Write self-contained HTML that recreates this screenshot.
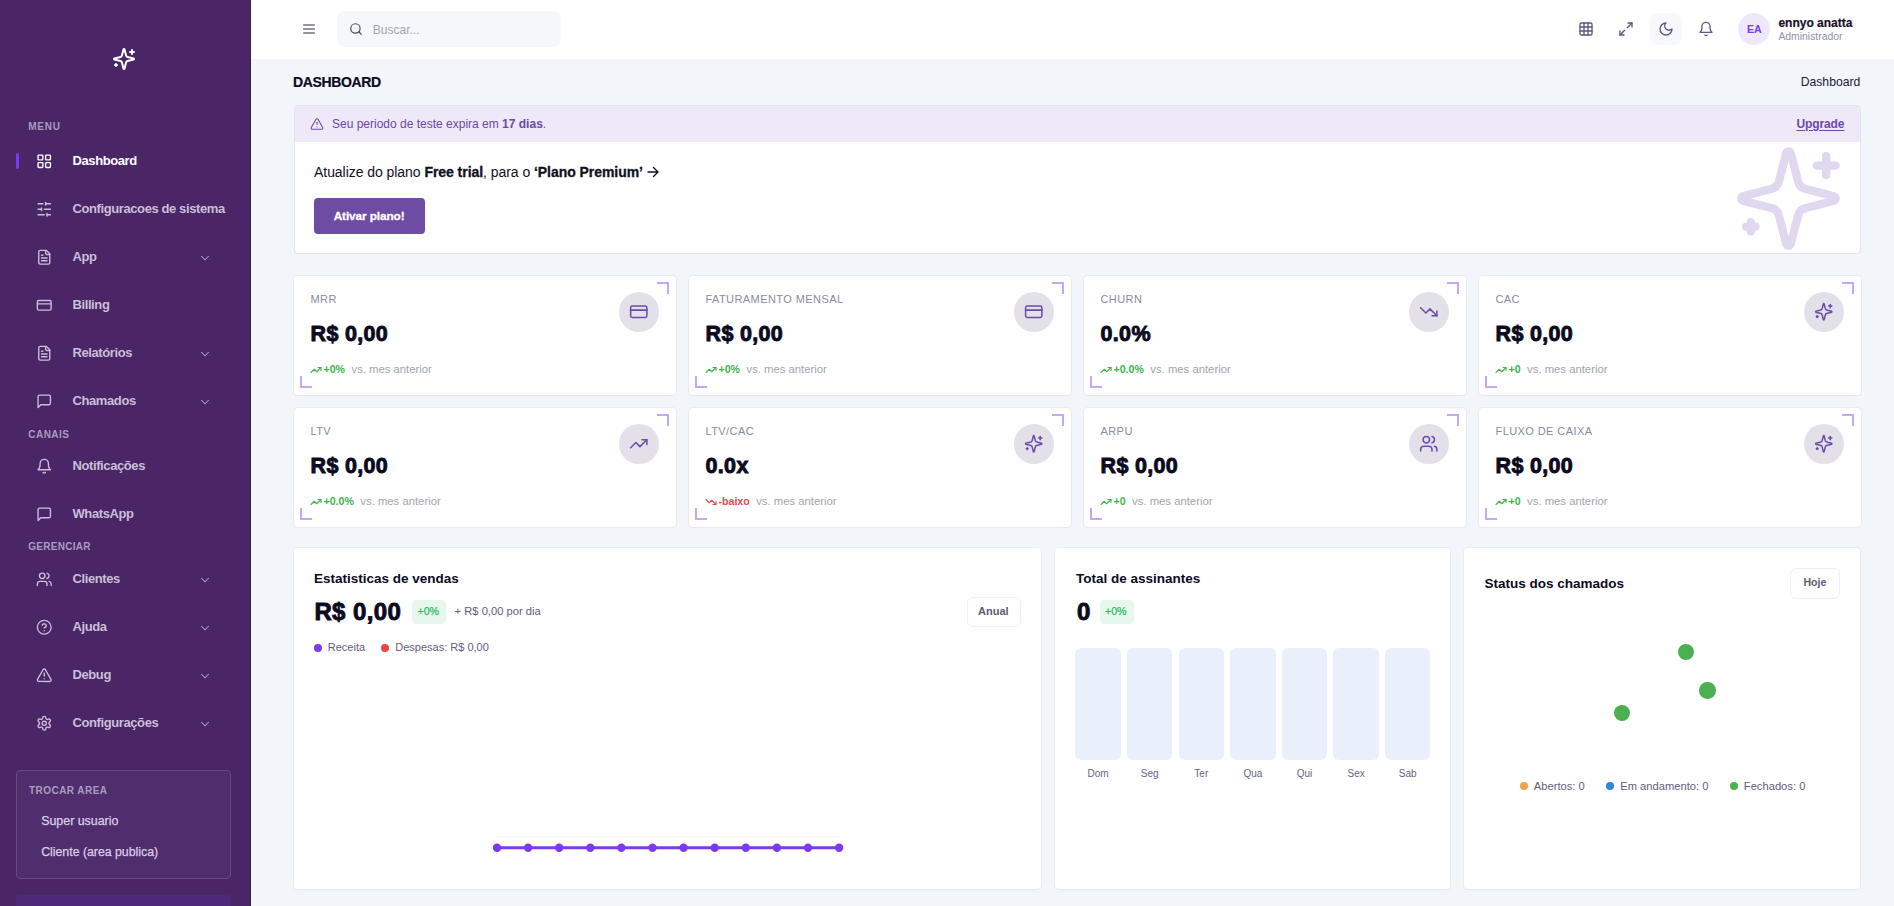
<!DOCTYPE html>
<html><head><meta charset="utf-8"><title>Dashboard</title>
<style>
html,body{margin:0;padding:0}
body{width:1894px;height:906px;position:relative;overflow:hidden;background:#f2f5f9;font-family:"Liberation Sans", sans-serif}
.t{position:absolute;white-space:nowrap}
.b{position:absolute;box-sizing:border-box}
.i{position:absolute;overflow:visible}
.card{background:#fff;border-radius:4px;box-shadow:0 0 0 1px rgba(226,230,238,0.6),0 1px 2px rgba(16,24,40,0.04)}
</style></head><body>
<div class="b" style="left:0;top:0;width:251px;height:906px;background:#4a2666;border-right:1px solid #3d1c58"></div>
<svg class="i" style="left:112px;top:47px;" width="24" height="24" viewBox="0 0 24 24" fill="none" stroke="#ffffff" stroke-width="2" stroke-linecap="round" stroke-linejoin="round"><path d="M9.937 15.5A2 2 0 0 0 8.5 14.063l-6.135-1.582a.5.5 0 0 1 0-.962L8.5 9.936A2 2 0 0 0 9.937 8.5l1.582-6.135a.5.5 0 0 1 .963 0L14.063 8.5A2 2 0 0 0 15.5 9.937l6.135 1.581a.5.5 0 0 1 0 .964L15.5 14.063a2 2 0 0 0-1.437 1.437l-1.582 6.135a.5.5 0 0 1-.963 0z"/><path d="M20 3v4"/><path d="M22 5h-4"/><path d="M4 17v2"/><path d="M5 18H3"/></svg>
<div class="t" style="left:28.2px;top:121.5px;font-size:10px;line-height:10px;color:#a89cbf;font-weight:700;letter-spacing:0.8px;">MENU</div>
<div class="b" style="left:16px;top:153px;width:3px;height:16px;border-radius:2px;background:#7c3aed"></div>
<svg class="i" style="left:35.85px;top:153.15px;" width="16.5" height="16.5" viewBox="0 0 24 24" fill="none" stroke="#ffffff" stroke-width="2" stroke-linecap="round" stroke-linejoin="round"><rect width="7" height="7" x="3" y="3" rx="1"/><rect width="7" height="7" x="14" y="3" rx="1"/><rect width="7" height="7" x="14" y="14" rx="1"/><rect width="7" height="7" x="3" y="14" rx="1"/></svg>
<div class="t" style="left:72.5px;top:153.8px;font-size:13px;line-height:13px;color:#ffffff;font-weight:700;letter-spacing:-0.4px;">Dashboard</div>
<svg class="i" style="left:35.85px;top:201.35px;" width="16.5" height="16.5" viewBox="0 0 24 24" fill="none" stroke="#c9bfd8" stroke-width="2" stroke-linecap="round" stroke-linejoin="round"><line x1="21" x2="14" y1="4" y2="4"/><line x1="10" x2="3" y1="4" y2="4"/><line x1="21" x2="12" y1="12" y2="12"/><line x1="8" x2="3" y1="12" y2="12"/><line x1="21" x2="16" y1="20" y2="20"/><line x1="12" x2="3" y1="20" y2="20"/><line x1="14" x2="14" y1="2" y2="6"/><line x1="8" x2="8" y1="10" y2="14"/><line x1="16" x2="16" y1="18" y2="22"/></svg>
<div class="t" style="left:72.5px;top:202.0px;font-size:13px;line-height:13px;color:#c9bfd8;font-weight:700;letter-spacing:-0.4px;">Configuracoes de sistema</div>
<svg class="i" style="left:35.85px;top:249.25px;" width="16.5" height="16.5" viewBox="0 0 24 24" fill="none" stroke="#c9bfd8" stroke-width="2" stroke-linecap="round" stroke-linejoin="round"><path d="M15 2H6a2 2 0 0 0-2 2v16a2 2 0 0 0 2 2h12a2 2 0 0 0 2-2V7Z"/><path d="M14 2v4a2 2 0 0 0 2 2h4"/><path d="M10 9H8"/><path d="M16 13H8"/><path d="M16 17H8"/></svg>
<div class="t" style="left:72.5px;top:249.9px;font-size:13px;line-height:13px;color:#c9bfd8;font-weight:700;letter-spacing:-0.4px;">App</div>
<svg class="i" style="left:197.5px;top:250.8px;" width="14" height="14" viewBox="0 0 24 24" fill="none" stroke="#b3a7c6" stroke-width="1.8" stroke-linecap="round" stroke-linejoin="round"><path d="m6 9 6 6 6-6"/></svg>
<svg class="i" style="left:35.85px;top:297.25px;" width="16.5" height="16.5" viewBox="0 0 24 24" fill="none" stroke="#c9bfd8" stroke-width="2" stroke-linecap="round" stroke-linejoin="round"><rect width="20" height="14" x="2" y="5" rx="2"/><line x1="2" x2="22" y1="10" y2="10"/></svg>
<div class="t" style="left:72.5px;top:297.9px;font-size:13px;line-height:13px;color:#c9bfd8;font-weight:700;letter-spacing:-0.4px;">Billing</div>
<svg class="i" style="left:35.85px;top:345.25px;" width="16.5" height="16.5" viewBox="0 0 24 24" fill="none" stroke="#c9bfd8" stroke-width="2" stroke-linecap="round" stroke-linejoin="round"><path d="M15 2H6a2 2 0 0 0-2 2v16a2 2 0 0 0 2 2h12a2 2 0 0 0 2-2V7Z"/><path d="M14 2v4a2 2 0 0 0 2 2h4"/><path d="M10 9H8"/><path d="M16 13H8"/><path d="M16 17H8"/></svg>
<div class="t" style="left:72.5px;top:345.9px;font-size:13px;line-height:13px;color:#c9bfd8;font-weight:700;letter-spacing:-0.4px;">Relatórios</div>
<svg class="i" style="left:197.5px;top:346.8px;" width="14" height="14" viewBox="0 0 24 24" fill="none" stroke="#b3a7c6" stroke-width="1.8" stroke-linecap="round" stroke-linejoin="round"><path d="m6 9 6 6 6-6"/></svg>
<svg class="i" style="left:35.85px;top:393.25px;" width="16.5" height="16.5" viewBox="0 0 24 24" fill="none" stroke="#c9bfd8" stroke-width="2" stroke-linecap="round" stroke-linejoin="round"><path d="M21 15a2 2 0 0 1-2 2H7l-4 4V5a2 2 0 0 1 2-2h14a2 2 0 0 1 2 2z"/></svg>
<div class="t" style="left:72.5px;top:393.9px;font-size:13px;line-height:13px;color:#c9bfd8;font-weight:700;letter-spacing:-0.4px;">Chamados</div>
<svg class="i" style="left:197.5px;top:394.8px;" width="14" height="14" viewBox="0 0 24 24" fill="none" stroke="#b3a7c6" stroke-width="1.8" stroke-linecap="round" stroke-linejoin="round"><path d="m6 9 6 6 6-6"/></svg>
<div class="t" style="left:28.2px;top:430.0px;font-size:10px;line-height:10px;color:#a89cbf;font-weight:700;letter-spacing:0.5px;">CANAIS</div>
<svg class="i" style="left:35.85px;top:458.05px;" width="16.5" height="16.5" viewBox="0 0 24 24" fill="none" stroke="#c9bfd8" stroke-width="2" stroke-linecap="round" stroke-linejoin="round"><path d="M6 8a6 6 0 0 1 12 0c0 7 3 9 3 9H3s3-2 3-9"/><path d="M10.3 21a1.94 1.94 0 0 0 3.4 0"/></svg>
<div class="t" style="left:72.5px;top:458.7px;font-size:13px;line-height:13px;color:#c9bfd8;font-weight:700;letter-spacing:-0.4px;">Notificações</div>
<svg class="i" style="left:35.85px;top:506.05px;" width="16.5" height="16.5" viewBox="0 0 24 24" fill="none" stroke="#c9bfd8" stroke-width="2" stroke-linecap="round" stroke-linejoin="round"><path d="M21 15a2 2 0 0 1-2 2H7l-4 4V5a2 2 0 0 1 2-2h14a2 2 0 0 1 2 2z"/></svg>
<div class="t" style="left:72.5px;top:506.7px;font-size:13px;line-height:13px;color:#c9bfd8;font-weight:700;letter-spacing:-0.4px;">WhatsApp</div>
<div class="t" style="left:28.2px;top:542.0px;font-size:10px;line-height:10px;color:#a89cbf;font-weight:700;letter-spacing:0.3px;">GERENCIAR</div>
<svg class="i" style="left:35.85px;top:571.45px;" width="16.5" height="16.5" viewBox="0 0 24 24" fill="none" stroke="#c9bfd8" stroke-width="2" stroke-linecap="round" stroke-linejoin="round"><path d="M16 21v-2a4 4 0 0 0-4-4H6a4 4 0 0 0-4 4v2"/><circle cx="9" cy="7" r="4"/><path d="M22 21v-2a4 4 0 0 0-3-3.87"/><path d="M16 3.13a4 4 0 0 1 0 7.75"/></svg>
<div class="t" style="left:72.5px;top:572.1px;font-size:13px;line-height:13px;color:#c9bfd8;font-weight:700;letter-spacing:-0.4px;">Clientes</div>
<svg class="i" style="left:197.5px;top:573.0px;" width="14" height="14" viewBox="0 0 24 24" fill="none" stroke="#b3a7c6" stroke-width="1.8" stroke-linecap="round" stroke-linejoin="round"><path d="m6 9 6 6 6-6"/></svg>
<svg class="i" style="left:35.85px;top:619.45px;" width="16.5" height="16.5" viewBox="0 0 24 24" fill="none" stroke="#c9bfd8" stroke-width="2" stroke-linecap="round" stroke-linejoin="round"><circle cx="12" cy="12" r="10"/><path d="M9.09 9a3 3 0 0 1 5.83 1c0 2-3 3-3 3"/><path d="M12 17h.01"/></svg>
<div class="t" style="left:72.5px;top:620.1px;font-size:13px;line-height:13px;color:#c9bfd8;font-weight:700;letter-spacing:-0.4px;">Ajuda</div>
<svg class="i" style="left:197.5px;top:621.0px;" width="14" height="14" viewBox="0 0 24 24" fill="none" stroke="#b3a7c6" stroke-width="1.8" stroke-linecap="round" stroke-linejoin="round"><path d="m6 9 6 6 6-6"/></svg>
<svg class="i" style="left:35.85px;top:667.45px;" width="16.5" height="16.5" viewBox="0 0 24 24" fill="none" stroke="#c9bfd8" stroke-width="2" stroke-linecap="round" stroke-linejoin="round"><path d="m21.73 18-8-14a2 2 0 0 0-3.48 0l-8 14A2 2 0 0 0 4 21h16a2 2 0 0 0 1.73-3"/><path d="M12 9v4"/><path d="M12 17h.01"/></svg>
<div class="t" style="left:72.5px;top:668.1px;font-size:13px;line-height:13px;color:#c9bfd8;font-weight:700;letter-spacing:-0.4px;">Debug</div>
<svg class="i" style="left:197.5px;top:669.0px;" width="14" height="14" viewBox="0 0 24 24" fill="none" stroke="#b3a7c6" stroke-width="1.8" stroke-linecap="round" stroke-linejoin="round"><path d="m6 9 6 6 6-6"/></svg>
<svg class="i" style="left:35.85px;top:715.45px;" width="16.5" height="16.5" viewBox="0 0 24 24" fill="none" stroke="#c9bfd8" stroke-width="2" stroke-linecap="round" stroke-linejoin="round"><path d="M12.22 2h-.44a2 2 0 0 0-2 2v.18a2 2 0 0 1-1 1.73l-.43.25a2 2 0 0 1-2 0l-.15-.08a2 2 0 0 0-2.73.73l-.22.38a2 2 0 0 0 .73 2.73l.15.1a2 2 0 0 1 1 1.72v.51a2 2 0 0 1-1 1.74l-.15.09a2 2 0 0 0-.73 2.73l.22.38a2 2 0 0 0 2.73.73l.15-.08a2 2 0 0 1 2 0l.43.25a2 2 0 0 1 1 1.73V20a2 2 0 0 0 2 2h.44a2 2 0 0 0 2-2v-.18a2 2 0 0 1 1-1.73l.43-.25a2 2 0 0 1 2 0l.15.08a2 2 0 0 0 2.73-.73l.22-.39a2 2 0 0 0-.73-2.73l-.15-.08a2 2 0 0 1-1-1.74v-.5a2 2 0 0 1 1-1.74l.15-.09a2 2 0 0 0 .73-2.73l-.22-.38a2 2 0 0 0-2.73-.73l-.15.08a2 2 0 0 1-2 0l-.43-.25a2 2 0 0 1-1-1.73V4a2 2 0 0 0-2-2z"/><circle cx="12" cy="12" r="3"/></svg>
<div class="t" style="left:72.5px;top:716.1px;font-size:13px;line-height:13px;color:#c9bfd8;font-weight:700;letter-spacing:-0.4px;">Configurações</div>
<svg class="i" style="left:197.5px;top:717.0px;" width="14" height="14" viewBox="0 0 24 24" fill="none" stroke="#b3a7c6" stroke-width="1.8" stroke-linecap="round" stroke-linejoin="round"><path d="m6 9 6 6 6-6"/></svg>
<div class="b" style="left:16px;top:770px;width:215px;height:109px;border:1px solid #65497f;border-radius:4px;background:#502e6d"></div>
<div class="t" style="left:29.0px;top:786.2px;font-size:10px;line-height:10px;color:#a89cbf;font-weight:700;letter-spacing:0.45px;">TROCAR AREA</div>
<div class="t" style="left:41.2px;top:814.5px;font-size:12.4px;line-height:12.4px;color:#d9cfe6;font-weight:400;letter-spacing:0px;-webkit-text-stroke-width:0.25px">Super usuario</div>
<div class="t" style="left:41.2px;top:846.3px;font-size:12.3px;line-height:12.3px;color:#d9cfe6;font-weight:400;letter-spacing:0px;-webkit-text-stroke-width:0.25px">Cliente (area publica)</div>
<div class="b" style="left:16px;top:895px;width:215px;height:20px;border-radius:4px;background:#4f2979"></div>
<div class="b" style="left:251px;top:0;width:1643px;height:59px;background:#ffffff"></div>
<svg class="i" style="left:301px;top:21px;" width="16" height="16" viewBox="0 0 24 24" fill="none" stroke="#6b7280" stroke-width="2" stroke-linecap="round" stroke-linejoin="round"><line x1="4" x2="20" y1="12" y2="12"/><line x1="4" x2="20" y1="6" y2="6"/><line x1="4" x2="20" y1="18" y2="18"/></svg>
<div class="b" style="left:337px;top:11px;width:224px;height:36px;border-radius:8px;background:#f5f7fa"></div>
<svg class="i" style="left:348.5px;top:22px;" width="14" height="14" viewBox="0 0 24 24" fill="none" stroke="#4e4266" stroke-width="2" stroke-linecap="round" stroke-linejoin="round"><circle cx="11" cy="11" r="8"/><path d="m21 21-4.3-4.3"/></svg>
<div class="t" style="left:372.8px;top:24.1px;font-size:12px;line-height:12px;color:#a7a2b8;font-weight:400;letter-spacing:0px;">Buscar...</div>
<svg class="i" style="left:1578px;top:21px;" width="16" height="16" viewBox="0 0 24 24" fill="none" stroke="#625380" stroke-width="2" stroke-linecap="round" stroke-linejoin="round"><rect width="18" height="18" x="3" y="3" rx="2"/><path d="M3 9h18"/><path d="M3 15h18"/><path d="M9 3v18"/><path d="M15 3v18"/></svg>
<svg class="i" style="left:1618px;top:21px;" width="16" height="16" viewBox="0 0 24 24" fill="none" stroke="#625380" stroke-width="2" stroke-linecap="round" stroke-linejoin="round"><polyline points="15 3 21 3 21 9"/><polyline points="9 21 3 21 3 15"/><line x1="21" x2="14" y1="3" y2="10"/><line x1="3" x2="10" y1="21" y2="14"/></svg>
<div class="b" style="left:1650px;top:13px;width:32px;height:32px;border-radius:8px;background:#f6f8fb"></div>
<svg class="i" style="left:1658px;top:21px;" width="16" height="16" viewBox="0 0 24 24" fill="none" stroke="#625380" stroke-width="2" stroke-linecap="round" stroke-linejoin="round"><path d="M12 3a6 6 0 0 0 9 9 9 9 0 1 1-9-9Z"/></svg>
<svg class="i" style="left:1698px;top:21px;" width="16" height="16" viewBox="0 0 24 24" fill="none" stroke="#625380" stroke-width="2" stroke-linecap="round" stroke-linejoin="round"><path d="M6 8a6 6 0 0 1 12 0c0 7 3 9 3 9H3s3-2 3-9"/><path d="M10.3 21a1.94 1.94 0 0 0 3.4 0"/></svg>
<div class="b" style="left:1738px;top:13px;width:32px;height:32px;border-radius:50%;background:#efe8fb"></div>
<div class="t" style="left:1747.0px;top:23.6px;font-size:10.6px;line-height:10.6px;color:#7c3aed;font-weight:700;letter-spacing:0px;">EA</div>
<div class="t" style="left:1778.4px;top:17.3px;font-size:12px;line-height:12px;color:#1a1029;font-weight:700;letter-spacing:0px;-webkit-text-stroke-width:0.2px">ennyo anatta</div>
<div class="t" style="left:1778.4px;top:31.7px;font-size:10.4px;line-height:10.4px;color:#8a93a6;font-weight:400;letter-spacing:0px;">Administrador</div>
<div class="t" style="left:292.9px;top:75.2px;font-size:14px;line-height:14px;color:#0b0b1e;font-weight:700;letter-spacing:-0.35px;-webkit-text-stroke-width:0.2px">DASHBOARD</div>
<div class="t" style="left:1800.7px;top:75.7px;font-size:12.2px;line-height:12.2px;color:#221a38;font-weight:400;letter-spacing:0px;">Dashboard</div>
<div class="b" style="left:293.5px;top:105px;width:1567px;height:149px;border-radius:4px;background:#fff;border:1px solid #e6e0f0;box-sizing:border-box;overflow:hidden"><div style="position:absolute;left:0;top:0;right:0;height:36px;background:#eee8f9"></div></div>
<svg class="i" style="left:310px;top:117px;" width="14" height="14" viewBox="0 0 24 24" fill="none" stroke="#6a48a6" stroke-width="1.8" stroke-linecap="round" stroke-linejoin="round"><path d="m21.73 18-8-14a2 2 0 0 0-3.48 0l-8 14A2 2 0 0 0 4 21h16a2 2 0 0 0 1.73-3"/><path d="M12 9v4"/><path d="M12 17h.01"/></svg>
<div class="t" style="left:332.0px;top:117.7px;font-size:12px;line-height:12px;color:#6a48a6;font-weight:400;letter-spacing:0px;">Seu periodo de teste expira em <b>17 dias</b>.</div>
<div class="t" style="left:1796.4px;top:117.7px;font-size:12px;line-height:12px;color:#6a48a6;font-weight:700;letter-spacing:-0.1px;text-decoration:underline;text-underline-offset:2px">Upgrade</div>
<div class="t" style="left:314.0px;top:164.9px;font-size:14px;line-height:14px;color:#111122;font-weight:400;letter-spacing:-0.05px;">Atualize do plano <b style="-webkit-text-stroke-width:0.3px">Free trial</b>, para o <b style="-webkit-text-stroke-width:0.3px">‘Plano Premium’</b> <svg width="12" height="12" viewBox="0 0 12 12" style="vertical-align:-1px" fill="none" stroke="#111122" stroke-width="1.4" stroke-linecap="round" stroke-linejoin="round"><path d="M1 6h10M6.5 1.5 11 6l-4.5 4.5"/></svg></div>
<div class="b" style="left:314px;top:198px;width:111px;height:36px;border-radius:4px;background:#6f4ca3"></div>
<div class="t" style="left:333.7px;top:210.9px;font-size:11.8px;line-height:11.8px;color:#ffffff;font-weight:700;letter-spacing:-0.1px;-webkit-text-stroke-width:0.3px">Ativar plano!</div>
<svg class="i" style="left:1732px;top:141.5px;" width="113" height="113" viewBox="0 0 24 24" fill="none" stroke="#e0d8ee" stroke-width="1.75" stroke-linecap="round" stroke-linejoin="round"><path d="M9.937 15.5A2 2 0 0 0 8.5 14.063l-6.135-1.582a.5.5 0 0 1 0-.962L8.5 9.936A2 2 0 0 0 9.937 8.5l1.582-6.135a.5.5 0 0 1 .963 0L14.063 8.5A2 2 0 0 0 15.5 9.937l6.135 1.581a.5.5 0 0 1 0 .964L15.5 14.063a2 2 0 0 0-1.437 1.437l-1.582 6.135a.5.5 0 0 1-.963 0z"/><path d="M20 3v4"/><path d="M22 5h-4"/><path d="M4 17v2"/><path d="M5 18H3"/></svg>
<div class="b card" style="left:293.50px;top:276px;width:382.00px;height:119px"></div>
<div class="b" style="left:657.00px;top:282px;width:12px;height:12px;border-top:2px solid #c4a8f6;border-right:2px solid #c4a8f6"></div>
<div class="b" style="left:300.00px;top:376px;width:12px;height:12px;border-bottom:2px solid #c4a8f6;border-left:2px solid #c4a8f6"></div>
<div class="t" style="left:310.5px;top:293.5px;font-size:11px;line-height:11px;color:#878c9e;font-weight:400;letter-spacing:0.42px;">MRR</div>
<div class="t" style="left:310.6px;top:324.4px;font-size:21.5px;line-height:21.5px;color:#0b0b1e;font-weight:700;letter-spacing:0.3px;-webkit-text-stroke-width:0.9px">R$ 0,00</div>
<div class="b" style="left:618.50px;top:292px;width:40px;height:40px;border-radius:50%;background:#e3e0e9"></div>
<svg class="i" style="left:628.75px;top:302.25px;" width="19.5" height="19.5" viewBox="0 0 24 24" fill="none" stroke="#6c4ca8" stroke-width="1.9" stroke-linecap="round" stroke-linejoin="round"><rect width="20" height="14" x="2" y="5" rx="2"/><line x1="2" x2="22" y1="10" y2="10"/></svg>
<svg class="i" style="left:310.0px;top:364px;" width="12" height="12" viewBox="0 0 24 24" fill="none" stroke="#3bb54a" stroke-width="2.2" stroke-linecap="round" stroke-linejoin="round"><polyline points="22 7 13.5 15.5 8.5 10.5 2 17"/><polyline points="16 7 22 7 22 13"/></svg>
<div class="t" style="left:323.5px;top:363.6px;font-size:10.6px;line-height:10.6px;color:#3bb54a;font-weight:700;letter-spacing:0px;">+0%<span style="font-weight:400;font-size:11.3px;color:#a0a5b0;margin-left:6.5px">vs. mes anterior</span></div>
<div class="b card" style="left:688.50px;top:276px;width:382.00px;height:119px"></div>
<div class="b" style="left:1052.00px;top:282px;width:12px;height:12px;border-top:2px solid #c4a8f6;border-right:2px solid #c4a8f6"></div>
<div class="b" style="left:695.00px;top:376px;width:12px;height:12px;border-bottom:2px solid #c4a8f6;border-left:2px solid #c4a8f6"></div>
<div class="t" style="left:705.5px;top:293.5px;font-size:11px;line-height:11px;color:#878c9e;font-weight:400;letter-spacing:0.42px;">FATURAMENTO MENSAL</div>
<div class="t" style="left:705.6px;top:324.4px;font-size:21.5px;line-height:21.5px;color:#0b0b1e;font-weight:700;letter-spacing:0.3px;-webkit-text-stroke-width:0.9px">R$ 0,00</div>
<div class="b" style="left:1013.50px;top:292px;width:40px;height:40px;border-radius:50%;background:#e3e0e9"></div>
<svg class="i" style="left:1023.75px;top:302.25px;" width="19.5" height="19.5" viewBox="0 0 24 24" fill="none" stroke="#6c4ca8" stroke-width="1.9" stroke-linecap="round" stroke-linejoin="round"><rect width="20" height="14" x="2" y="5" rx="2"/><line x1="2" x2="22" y1="10" y2="10"/></svg>
<svg class="i" style="left:705.0px;top:364px;" width="12" height="12" viewBox="0 0 24 24" fill="none" stroke="#3bb54a" stroke-width="2.2" stroke-linecap="round" stroke-linejoin="round"><polyline points="22 7 13.5 15.5 8.5 10.5 2 17"/><polyline points="16 7 22 7 22 13"/></svg>
<div class="t" style="left:718.5px;top:363.6px;font-size:10.6px;line-height:10.6px;color:#3bb54a;font-weight:700;letter-spacing:0px;">+0%<span style="font-weight:400;font-size:11.3px;color:#a0a5b0;margin-left:6.5px">vs. mes anterior</span></div>
<div class="b card" style="left:1083.50px;top:276px;width:382.00px;height:119px"></div>
<div class="b" style="left:1447.00px;top:282px;width:12px;height:12px;border-top:2px solid #c4a8f6;border-right:2px solid #c4a8f6"></div>
<div class="b" style="left:1090.00px;top:376px;width:12px;height:12px;border-bottom:2px solid #c4a8f6;border-left:2px solid #c4a8f6"></div>
<div class="t" style="left:1100.5px;top:293.5px;font-size:11px;line-height:11px;color:#878c9e;font-weight:400;letter-spacing:0.42px;">CHURN</div>
<div class="t" style="left:1100.6px;top:324.4px;font-size:21.5px;line-height:21.5px;color:#0b0b1e;font-weight:700;letter-spacing:0.3px;-webkit-text-stroke-width:0.9px">0.0%</div>
<div class="b" style="left:1408.50px;top:292px;width:40px;height:40px;border-radius:50%;background:#e3e0e9"></div>
<svg class="i" style="left:1418.75px;top:302.25px;" width="19.5" height="19.5" viewBox="0 0 24 24" fill="none" stroke="#6c4ca8" stroke-width="1.9" stroke-linecap="round" stroke-linejoin="round"><polyline points="22 17 13.5 8.5 8.5 13.5 2 7"/><polyline points="16 17 22 17 22 11"/></svg>
<svg class="i" style="left:1100.0px;top:364px;" width="12" height="12" viewBox="0 0 24 24" fill="none" stroke="#3bb54a" stroke-width="2.2" stroke-linecap="round" stroke-linejoin="round"><polyline points="22 7 13.5 15.5 8.5 10.5 2 17"/><polyline points="16 7 22 7 22 13"/></svg>
<div class="t" style="left:1113.5px;top:363.6px;font-size:10.6px;line-height:10.6px;color:#3bb54a;font-weight:700;letter-spacing:0px;">+0.0%<span style="font-weight:400;font-size:11.3px;color:#a0a5b0;margin-left:6.5px">vs. mes anterior</span></div>
<div class="b card" style="left:1478.50px;top:276px;width:382.00px;height:119px"></div>
<div class="b" style="left:1842.00px;top:282px;width:12px;height:12px;border-top:2px solid #c4a8f6;border-right:2px solid #c4a8f6"></div>
<div class="b" style="left:1485.00px;top:376px;width:12px;height:12px;border-bottom:2px solid #c4a8f6;border-left:2px solid #c4a8f6"></div>
<div class="t" style="left:1495.5px;top:293.5px;font-size:11px;line-height:11px;color:#878c9e;font-weight:400;letter-spacing:0.42px;">CAC</div>
<div class="t" style="left:1495.6px;top:324.4px;font-size:21.5px;line-height:21.5px;color:#0b0b1e;font-weight:700;letter-spacing:0.3px;-webkit-text-stroke-width:0.9px">R$ 0,00</div>
<div class="b" style="left:1803.50px;top:292px;width:40px;height:40px;border-radius:50%;background:#e3e0e9"></div>
<svg class="i" style="left:1813.75px;top:302.25px;" width="19.5" height="19.5" viewBox="0 0 24 24" fill="none" stroke="#6c4ca8" stroke-width="1.9" stroke-linecap="round" stroke-linejoin="round"><path d="M9.937 15.5A2 2 0 0 0 8.5 14.063l-6.135-1.582a.5.5 0 0 1 0-.962L8.5 9.936A2 2 0 0 0 9.937 8.5l1.582-6.135a.5.5 0 0 1 .963 0L14.063 8.5A2 2 0 0 0 15.5 9.937l6.135 1.581a.5.5 0 0 1 0 .964L15.5 14.063a2 2 0 0 0-1.437 1.437l-1.582 6.135a.5.5 0 0 1-.963 0z"/><path d="M20 3v4"/><path d="M22 5h-4"/><path d="M4 17v2"/><path d="M5 18H3"/></svg>
<svg class="i" style="left:1495.0px;top:364px;" width="12" height="12" viewBox="0 0 24 24" fill="none" stroke="#3bb54a" stroke-width="2.2" stroke-linecap="round" stroke-linejoin="round"><polyline points="22 7 13.5 15.5 8.5 10.5 2 17"/><polyline points="16 7 22 7 22 13"/></svg>
<div class="t" style="left:1508.5px;top:363.6px;font-size:10.6px;line-height:10.6px;color:#3bb54a;font-weight:700;letter-spacing:0px;">+0<span style="font-weight:400;font-size:11.3px;color:#a0a5b0;margin-left:6.5px">vs. mes anterior</span></div>
<div class="b card" style="left:293.50px;top:408px;width:382.00px;height:119px"></div>
<div class="b" style="left:657.00px;top:414px;width:12px;height:12px;border-top:2px solid #c4a8f6;border-right:2px solid #c4a8f6"></div>
<div class="b" style="left:300.00px;top:508px;width:12px;height:12px;border-bottom:2px solid #c4a8f6;border-left:2px solid #c4a8f6"></div>
<div class="t" style="left:310.5px;top:425.5px;font-size:11px;line-height:11px;color:#878c9e;font-weight:400;letter-spacing:0.42px;">LTV</div>
<div class="t" style="left:310.6px;top:456.4px;font-size:21.5px;line-height:21.5px;color:#0b0b1e;font-weight:700;letter-spacing:0.3px;-webkit-text-stroke-width:0.9px">R$ 0,00</div>
<div class="b" style="left:618.50px;top:424px;width:40px;height:40px;border-radius:50%;background:#e3e0e9"></div>
<svg class="i" style="left:628.75px;top:434.25px;" width="19.5" height="19.5" viewBox="0 0 24 24" fill="none" stroke="#6c4ca8" stroke-width="1.9" stroke-linecap="round" stroke-linejoin="round"><polyline points="22 7 13.5 15.5 8.5 10.5 2 17"/><polyline points="16 7 22 7 22 13"/></svg>
<svg class="i" style="left:310.0px;top:496px;" width="12" height="12" viewBox="0 0 24 24" fill="none" stroke="#3bb54a" stroke-width="2.2" stroke-linecap="round" stroke-linejoin="round"><polyline points="22 7 13.5 15.5 8.5 10.5 2 17"/><polyline points="16 7 22 7 22 13"/></svg>
<div class="t" style="left:323.5px;top:495.6px;font-size:10.6px;line-height:10.6px;color:#3bb54a;font-weight:700;letter-spacing:0px;">+0.0%<span style="font-weight:400;font-size:11.3px;color:#a0a5b0;margin-left:6.5px">vs. mes anterior</span></div>
<div class="b card" style="left:688.50px;top:408px;width:382.00px;height:119px"></div>
<div class="b" style="left:1052.00px;top:414px;width:12px;height:12px;border-top:2px solid #c4a8f6;border-right:2px solid #c4a8f6"></div>
<div class="b" style="left:695.00px;top:508px;width:12px;height:12px;border-bottom:2px solid #c4a8f6;border-left:2px solid #c4a8f6"></div>
<div class="t" style="left:705.5px;top:425.5px;font-size:11px;line-height:11px;color:#878c9e;font-weight:400;letter-spacing:0.42px;">LTV/CAC</div>
<div class="t" style="left:705.6px;top:456.4px;font-size:21.5px;line-height:21.5px;color:#0b0b1e;font-weight:700;letter-spacing:0.3px;-webkit-text-stroke-width:0.9px">0.0x</div>
<div class="b" style="left:1013.50px;top:424px;width:40px;height:40px;border-radius:50%;background:#e3e0e9"></div>
<svg class="i" style="left:1023.75px;top:434.25px;" width="19.5" height="19.5" viewBox="0 0 24 24" fill="none" stroke="#6c4ca8" stroke-width="1.9" stroke-linecap="round" stroke-linejoin="round"><path d="M9.937 15.5A2 2 0 0 0 8.5 14.063l-6.135-1.582a.5.5 0 0 1 0-.962L8.5 9.936A2 2 0 0 0 9.937 8.5l1.582-6.135a.5.5 0 0 1 .963 0L14.063 8.5A2 2 0 0 0 15.5 9.937l6.135 1.581a.5.5 0 0 1 0 .964L15.5 14.063a2 2 0 0 0-1.437 1.437l-1.582 6.135a.5.5 0 0 1-.963 0z"/><path d="M20 3v4"/><path d="M22 5h-4"/><path d="M4 17v2"/><path d="M5 18H3"/></svg>
<svg class="i" style="left:705.0px;top:496px;" width="12" height="12" viewBox="0 0 24 24" fill="none" stroke="#e5484d" stroke-width="2.2" stroke-linecap="round" stroke-linejoin="round"><polyline points="22 17 13.5 8.5 8.5 13.5 2 7"/><polyline points="16 17 22 17 22 11"/></svg>
<div class="t" style="left:718.5px;top:495.6px;font-size:10.6px;line-height:10.6px;color:#e5484d;font-weight:700;letter-spacing:0px;">-baixo<span style="font-weight:400;font-size:11.3px;color:#a0a5b0;margin-left:6.5px">vs. mes anterior</span></div>
<div class="b card" style="left:1083.50px;top:408px;width:382.00px;height:119px"></div>
<div class="b" style="left:1447.00px;top:414px;width:12px;height:12px;border-top:2px solid #c4a8f6;border-right:2px solid #c4a8f6"></div>
<div class="b" style="left:1090.00px;top:508px;width:12px;height:12px;border-bottom:2px solid #c4a8f6;border-left:2px solid #c4a8f6"></div>
<div class="t" style="left:1100.5px;top:425.5px;font-size:11px;line-height:11px;color:#878c9e;font-weight:400;letter-spacing:0.42px;">ARPU</div>
<div class="t" style="left:1100.6px;top:456.4px;font-size:21.5px;line-height:21.5px;color:#0b0b1e;font-weight:700;letter-spacing:0.3px;-webkit-text-stroke-width:0.9px">R$ 0,00</div>
<div class="b" style="left:1408.50px;top:424px;width:40px;height:40px;border-radius:50%;background:#e3e0e9"></div>
<svg class="i" style="left:1418.75px;top:434.25px;" width="19.5" height="19.5" viewBox="0 0 24 24" fill="none" stroke="#6c4ca8" stroke-width="1.9" stroke-linecap="round" stroke-linejoin="round"><path d="M16 21v-2a4 4 0 0 0-4-4H6a4 4 0 0 0-4 4v2"/><circle cx="9" cy="7" r="4"/><path d="M22 21v-2a4 4 0 0 0-3-3.87"/><path d="M16 3.13a4 4 0 0 1 0 7.75"/></svg>
<svg class="i" style="left:1100.0px;top:496px;" width="12" height="12" viewBox="0 0 24 24" fill="none" stroke="#3bb54a" stroke-width="2.2" stroke-linecap="round" stroke-linejoin="round"><polyline points="22 7 13.5 15.5 8.5 10.5 2 17"/><polyline points="16 7 22 7 22 13"/></svg>
<div class="t" style="left:1113.5px;top:495.6px;font-size:10.6px;line-height:10.6px;color:#3bb54a;font-weight:700;letter-spacing:0px;">+0<span style="font-weight:400;font-size:11.3px;color:#a0a5b0;margin-left:6.5px">vs. mes anterior</span></div>
<div class="b card" style="left:1478.50px;top:408px;width:382.00px;height:119px"></div>
<div class="b" style="left:1842.00px;top:414px;width:12px;height:12px;border-top:2px solid #c4a8f6;border-right:2px solid #c4a8f6"></div>
<div class="b" style="left:1485.00px;top:508px;width:12px;height:12px;border-bottom:2px solid #c4a8f6;border-left:2px solid #c4a8f6"></div>
<div class="t" style="left:1495.5px;top:425.5px;font-size:11px;line-height:11px;color:#878c9e;font-weight:400;letter-spacing:0.42px;">FLUXO DE CAIXA</div>
<div class="t" style="left:1495.6px;top:456.4px;font-size:21.5px;line-height:21.5px;color:#0b0b1e;font-weight:700;letter-spacing:0.3px;-webkit-text-stroke-width:0.9px">R$ 0,00</div>
<div class="b" style="left:1803.50px;top:424px;width:40px;height:40px;border-radius:50%;background:#e3e0e9"></div>
<svg class="i" style="left:1813.75px;top:434.25px;" width="19.5" height="19.5" viewBox="0 0 24 24" fill="none" stroke="#6c4ca8" stroke-width="1.9" stroke-linecap="round" stroke-linejoin="round"><path d="M9.937 15.5A2 2 0 0 0 8.5 14.063l-6.135-1.582a.5.5 0 0 1 0-.962L8.5 9.936A2 2 0 0 0 9.937 8.5l1.582-6.135a.5.5 0 0 1 .963 0L14.063 8.5A2 2 0 0 0 15.5 9.937l6.135 1.581a.5.5 0 0 1 0 .964L15.5 14.063a2 2 0 0 0-1.437 1.437l-1.582 6.135a.5.5 0 0 1-.963 0z"/><path d="M20 3v4"/><path d="M22 5h-4"/><path d="M4 17v2"/><path d="M5 18H3"/></svg>
<svg class="i" style="left:1495.0px;top:496px;" width="12" height="12" viewBox="0 0 24 24" fill="none" stroke="#3bb54a" stroke-width="2.2" stroke-linecap="round" stroke-linejoin="round"><polyline points="22 7 13.5 15.5 8.5 10.5 2 17"/><polyline points="16 7 22 7 22 13"/></svg>
<div class="t" style="left:1508.5px;top:495.6px;font-size:10.6px;line-height:10.6px;color:#3bb54a;font-weight:700;letter-spacing:0px;">+0<span style="font-weight:400;font-size:11.3px;color:#a0a5b0;margin-left:6.5px">vs. mes anterior</span></div>
<div class="b card" style="left:293.5px;top:548px;width:747.5px;height:341px"></div>
<div class="t" style="left:314.0px;top:571.9px;font-size:13.5px;line-height:13.5px;color:#0b0b1e;font-weight:700;letter-spacing:0px;">Estatisticas de vendas</div>
<div class="t" style="left:314.4px;top:600.1px;font-size:24px;line-height:24px;color:#0b0b1e;font-weight:700;letter-spacing:0.4px;-webkit-text-stroke-width:0.9px">R$ 0,00</div>
<div class="b" style="left:412px;top:600px;width:34px;height:24px;border-radius:4px;background:#e7f7ee"></div>
<div class="t" style="left:417.5px;top:606.3px;font-size:10.6px;line-height:10.6px;color:#2dbb5c;font-weight:400;letter-spacing:0px;-webkit-text-stroke-width:0.25px">+0%</div>
<div class="t" style="left:454.6px;top:606.2px;font-size:11.2px;line-height:11.2px;color:#625e80;font-weight:400;letter-spacing:0px;">+ R$ 0,00 por dia</div>
<div class="b" style="left:967px;top:597px;width:54px;height:30px;border-radius:6px;border:1px solid #edf0f4;box-sizing:border-box"></div>
<div class="t" style="left:978.0px;top:606.1px;font-size:11px;line-height:11px;color:#5b5b70;font-weight:700;letter-spacing:0px;">Anual</div>
<div class="b" style="left:314px;top:643.5px;width:8px;height:8px;border-radius:50%;background:#7c3aed"></div>
<div class="t" style="left:327.8px;top:642.3px;font-size:11px;line-height:11px;color:#625e80;font-weight:400;letter-spacing:0px;">Receita</div>
<div class="b" style="left:381px;top:643.5px;width:8px;height:8px;border-radius:50%;background:#ef4444"></div>
<div class="t" style="left:395.3px;top:642.3px;font-size:11px;line-height:11px;color:#625e80;font-weight:400;letter-spacing:0px;">Despesas: R$ 0,00</div>
<svg class="i" style="left:0;top:0" width="1894" height="906"><line x1="497" y1="837" x2="839" y2="837" stroke="#eef1f5" stroke-width="1"/><line x1="497" y1="847.8" x2="839" y2="847.8" stroke="#7c3aed" stroke-width="3"/><g fill="#7c3aed"><circle cx="497.0" cy="847.8" r="4.2"/><circle cx="528.1" cy="847.8" r="4.2"/><circle cx="559.2" cy="847.8" r="4.2"/><circle cx="590.3" cy="847.8" r="4.2"/><circle cx="621.4" cy="847.8" r="4.2"/><circle cx="652.5" cy="847.8" r="4.2"/><circle cx="683.6" cy="847.8" r="4.2"/><circle cx="714.7" cy="847.8" r="4.2"/><circle cx="745.8" cy="847.8" r="4.2"/><circle cx="776.9" cy="847.8" r="4.2"/><circle cx="808.0" cy="847.8" r="4.2"/><circle cx="839.1" cy="847.8" r="4.2"/></g></svg>
<div class="b card" style="left:1055px;top:548px;width:395px;height:341px"></div>
<div class="t" style="left:1076.1px;top:571.9px;font-size:13.5px;line-height:13.5px;color:#0b0b1e;font-weight:700;letter-spacing:0px;">Total de assinantes</div>
<div class="t" style="left:1076.9px;top:600.1px;font-size:24px;line-height:24px;color:#0b0b1e;font-weight:700;letter-spacing:0.4px;-webkit-text-stroke-width:0.9px">0</div>
<div class="b" style="left:1099.5px;top:600px;width:34.5px;height:24px;border-radius:4px;background:#e7f7ee"></div>
<div class="t" style="left:1105.0px;top:606.3px;font-size:10.6px;line-height:10.6px;color:#2dbb5c;font-weight:400;letter-spacing:0px;-webkit-text-stroke-width:0.25px">+0%</div>
<div class="b" style="left:1075.3px;top:648px;width:45.6px;height:112px;border-radius:6px;background:#eaf0fb"></div>
<div class="t" style="left:1075.3px;top:768.9px;width:45.6px;text-align:center;font-size:10px;line-height:10px;color:#66637f">Dom</div>
<div class="b" style="left:1126.9px;top:648px;width:45.6px;height:112px;border-radius:6px;background:#eaf0fb"></div>
<div class="t" style="left:1126.9px;top:768.9px;width:45.6px;text-align:center;font-size:10px;line-height:10px;color:#66637f">Seg</div>
<div class="b" style="left:1178.5px;top:648px;width:45.6px;height:112px;border-radius:6px;background:#eaf0fb"></div>
<div class="t" style="left:1178.5px;top:768.9px;width:45.6px;text-align:center;font-size:10px;line-height:10px;color:#66637f">Ter</div>
<div class="b" style="left:1230.1px;top:648px;width:45.6px;height:112px;border-radius:6px;background:#eaf0fb"></div>
<div class="t" style="left:1230.1px;top:768.9px;width:45.6px;text-align:center;font-size:10px;line-height:10px;color:#66637f">Qua</div>
<div class="b" style="left:1281.7px;top:648px;width:45.6px;height:112px;border-radius:6px;background:#eaf0fb"></div>
<div class="t" style="left:1281.7px;top:768.9px;width:45.6px;text-align:center;font-size:10px;line-height:10px;color:#66637f">Qui</div>
<div class="b" style="left:1333.3px;top:648px;width:45.6px;height:112px;border-radius:6px;background:#eaf0fb"></div>
<div class="t" style="left:1333.3px;top:768.9px;width:45.6px;text-align:center;font-size:10px;line-height:10px;color:#66637f">Sex</div>
<div class="b" style="left:1384.9px;top:648px;width:45.6px;height:112px;border-radius:6px;background:#eaf0fb"></div>
<div class="t" style="left:1384.9px;top:768.9px;width:45.6px;text-align:center;font-size:10px;line-height:10px;color:#66637f">Sab</div>
<div class="b card" style="left:1464px;top:548px;width:396px;height:341px"></div>
<div class="t" style="left:1484.5px;top:576.5px;font-size:13.5px;line-height:13.5px;color:#0b0b1e;font-weight:700;letter-spacing:0px;">Status dos chamados</div>
<div class="b" style="left:1790px;top:568px;width:49.5px;height:30.5px;border-radius:6px;border:1px solid #edf0f4;box-sizing:border-box"></div>
<div class="t" style="left:1803.5px;top:576.8px;font-size:10.5px;line-height:10.5px;color:#5b5b70;font-weight:700;letter-spacing:0px;">Hoje</div>
<div class="b" style="left:1677.8px;top:644.1px;width:16.4px;height:16.4px;border-radius:50%;background:#4caf50"></div>
<div class="b" style="left:1699.2px;top:682.4px;width:16.4px;height:16.4px;border-radius:50%;background:#4caf50"></div>
<div class="b" style="left:1613.6px;top:704.7px;width:16.4px;height:16.4px;border-radius:50%;background:#4caf50"></div>
<div class="b" style="left:1519.7px;top:782.4px;width:8px;height:8px;border-radius:50%;background:#f0a14a"></div>
<div class="t" style="left:1533.8px;top:780.5px;font-size:11.2px;line-height:11.2px;color:#625e80;font-weight:400;letter-spacing:0px;">Abertos: 0</div>
<div class="b" style="left:1605.7px;top:782.4px;width:8px;height:8px;border-radius:50%;background:#2f86e0"></div>
<div class="t" style="left:1620.2px;top:780.5px;font-size:11.2px;line-height:11.2px;color:#625e80;font-weight:400;letter-spacing:0px;">Em andamento: 0</div>
<div class="b" style="left:1729.7px;top:782.4px;width:8px;height:8px;border-radius:50%;background:#4caf50"></div>
<div class="t" style="left:1743.8px;top:780.5px;font-size:11.2px;line-height:11.2px;color:#625e80;font-weight:400;letter-spacing:0px;">Fechados: 0</div>
</body></html>
